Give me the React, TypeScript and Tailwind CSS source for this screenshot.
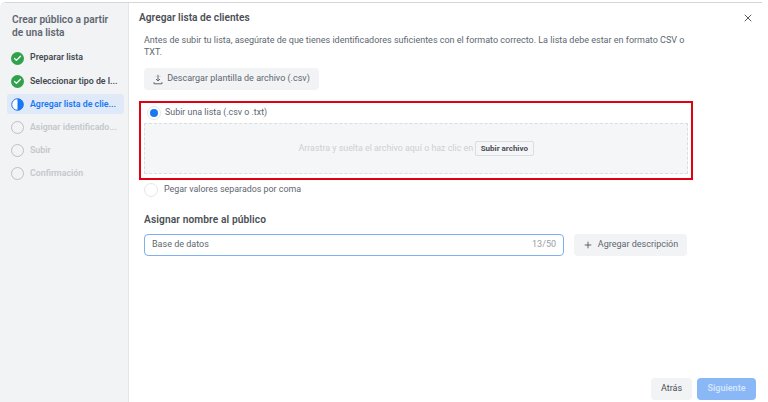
import { Check, Plus, X } from "lucide-react";

const steps = [
  { label: "Preparar lista", state: "done" },
  { label: "Seleccionar tipo de l...", state: "done" },
  { label: "Agregar lista de clie...", state: "active" },
  { label: "Asignar identificado...", state: "todo" },
  { label: "Subir", state: "todo" },
  { label: "Confirmación", state: "todo" },
];

function StepIcon({ state }: { state: string }) {
  if (state === "done") {
    return (
      <span className="w-[13px] h-[13px] rounded-full bg-[#31a24c] flex items-center justify-center shrink-0">
        <Check size={9} strokeWidth={3.5} className="text-white" />
      </span>
    );
  }
  if (state === "active") {
    return (
      <svg width="13" height="13" viewBox="0 0 13 13" className="shrink-0">
        <circle cx="6.5" cy="6.5" r="5.75" fill="#fff" stroke="#1877f2" strokeWidth="1" />
        <path d="M6.5 0.5a6 6 0 0 1 0 12z" fill="#1877f2" />
      </svg>
    );
  }
  return <span className="w-[13px] h-[13px] rounded-full border-[1.5px] border-[#bcc0c4] shrink-0" />;
}

function DownloadIcon() {
  return (
    <svg width="10" height="11" viewBox="0 0 10 11" fill="none" stroke="#65676b" strokeWidth="1" className="shrink-0">
      <path d="M5 .8v6M3 5l2 2 2-2" />
      <path d="M3.2 2.4H2.8M6.8 2.4h.4" />
      <path d="M1 8.2v1.6h8V8.2" />
    </svg>
  );
}

export default function App() {
  return (
    <div className="w-[768px] h-[402px] bg-white overflow-hidden font-['Roboto',sans-serif] pt-[2px] text-[#4b4f56]">
      <div className="h-[400px] border-t border-[#d4d6da] rounded-tl-[6px] flex w-[762px]">
        <aside className="w-[129px] h-full bg-[#f2f3f5] border-r border-[#e4e6eb] rounded-tl-[6px] pl-[7px] pr-[4px] shrink-0">
          <h2 className="pl-[5px] pr-[8px] pt-[10px] text-[10.2px] leading-[13px] font-semibold text-[#606770]">
            Crear público a partir de una lista
          </h2>
          <ul className="mt-[9px] flex flex-col gap-[3.2px]">
            {steps.map((s) => (
              <li
                key={s.label}
                className={
                  "h-[20px] flex items-center gap-[6px] pl-[4px] rounded-[3px] " +
                  (s.state === "active" ? "bg-[#dfe9f8]" : "")
                }
              >
                <StepIcon state={s.state} />
                <span
                  className={
                    "text-[8.8px] font-semibold whitespace-nowrap " +
                    (s.state === "done"
                      ? "text-[#444950]"
                      : s.state === "active"
                        ? "text-[#1877f2]"
                        : "text-[#c4c7cc]")
                  }
                >
                  {s.label}
                </span>
              </li>
            ))}
          </ul>
        </aside>

        <main className="flex-1 flex flex-col relative pl-[10px] pr-[4px]">
          <div className="flex items-center justify-between h-[29px] pt-[1px]">
            <h1 className="text-[10.2px] font-semibold text-[#4b4f56]">Agregar lista de clientes</h1>
            <X size={12} strokeWidth={1.8} className="text-[#444950] mr-[4px] -mt-[1px]" />
          </div>

          <div className="pl-[5px] pr-[62px]">
            <p className="mt-[2px] text-[9px] leading-[12px] text-[#606770]">
              Antes de subir tu lista, asegúrate de que tienes identificadores suficientes con el formato correcto. La lista debe estar en formato CSV o TXT.
            </p>
            <button className="mt-[10px] w-[175px] h-[22px] bg-[#f2f3f5] rounded-[4px] flex items-center justify-center gap-[4px] text-[9px] text-[#606770]">
              <DownloadIcon />
              Descargar plantilla de archivo (.csv)
            </button>
          </div>

          <div className="mt-[11px] w-[554px] h-[79px] border-2 border-[#e0000f] px-[3px]">
            <div className="h-[20px] flex items-center pl-[3px] gap-[4px]">
              <span className="w-[14px] h-[14px] rounded-full border border-[#e4e6eb] flex items-center justify-center">
                <span className="w-[8px] h-[8px] rounded-full bg-[#1877f2]" />
              </span>
              <span className="text-[8.9px] text-[#606770]">Subir una lista (.csv o .txt)</span>
            </div>
            <div className="h-[51px] bg-[#f5f6f7] border border-dashed border-[#dadde1] flex items-center justify-center gap-[2px]">
              <span className="text-[8.9px] text-[#ccd0d5]">Arrastra y suelta el archivo aquí o haz clic en</span>
              <span className="h-[15px] px-[4.5px] bg-[#f5f6f7] border border-[#dadde1] rounded-[2px] flex items-center text-[8px] font-bold text-[#4b4f56]">
                Subir archivo
              </span>
            </div>
          </div>

          <div className="mt-[1px] h-[17px] flex items-center pl-[5px] gap-[6px]">
            <span className="w-[14px] h-[14px] rounded-full border border-[#e4e6eb] bg-white" />
            <span className="text-[8.9px] text-[#606770]">Pegar valores separados por coma</span>
          </div>

          <h3 className="mt-[15px] pl-[5px] text-[10.2px] leading-[14px] font-semibold tracking-[0.1px] text-[#4b4f56]">
            Asignar nombre al público
          </h3>

          <div className="mt-[7px] pl-[5px] flex items-center gap-[10px]">
            <div className="w-[420px] h-[22px] border-[1.5px] border-[#7fb0ee] rounded-[4px] flex items-center justify-between pl-[7px] pr-[7px]">
              <span className="text-[9px] text-[#606770]">Base de datos</span>
              <span className="text-[9px] text-[#9a9da3]">13/50</span>
            </div>
            <button className="w-[113px] h-[22px] bg-[#f2f3f5] rounded-[4px] flex items-center justify-center gap-[5px] text-[9px] text-[#606770]">
              <Plus size={10} strokeWidth={2} className="text-[#444950]" />
              Agregar descripción
            </button>
          </div>

          <div className="mt-auto mb-[2px] flex justify-end gap-[5px] pr-[2px]">
            <button className="w-[41px] h-[22px] bg-[#f2f3f5] rounded-[4px] text-[9px] text-[#4b4f56]">Atrás</button>
            <button className="w-[59px] h-[22px] bg-[#8ab8f6] rounded-[4px] text-[9px] font-semibold text-[#d5e5fb]">Siguiente</button>
          </div>
        </main>
      </div>
    </div>
  );
}
